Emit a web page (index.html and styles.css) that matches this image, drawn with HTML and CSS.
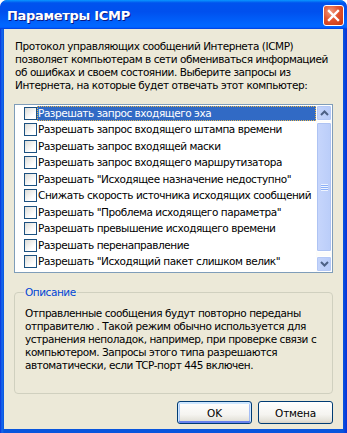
FILE: index.html
```html
<!DOCTYPE html>
<html lang="ru">
<head>
    <meta charset="UTF-8">
    <meta name="viewport" content="width=device-width, initial-scale=1.0">
    <title>Параметры ICMP</title>
    <link rel="stylesheet" href="styles.css">
</head>
<body>
    <div class="window">
        <div class="titlebar">
            <span class="title">Параметры ICMP</span>
            <button class="close" aria-label="Закрыть">
                <svg width="13" height="13" viewBox="0 0 13 13">
                    <path d="M2 2 L11 11 M11 2 L2 11" stroke="#fff" stroke-width="2.4" stroke-linecap="square"/>
                </svg>
            </button>
        </div>
        <div class="client">
            <p class="intro">Протокол управляющих сообщений Интернета (ICMP)<br>
            позволяет компьютерам в сети обмениваться информацией<br>
            об ошибках и своем состоянии. Выберите запросы из<br>
            Интернета, на которые будет отвечать этот компьютер:</p>

            <div class="listbox">
                <ul class="items">
                    <li class="item selected"><span class="check"></span><span class="label">Разрешать запрос входящего эха</span></li>
                    <li class="item"><span class="check"></span><span class="label">Разрешать запрос входящего штампа времени</span></li>
                    <li class="item"><span class="check"></span><span class="label">Разрешать запрос входящей маски</span></li>
                    <li class="item"><span class="check"></span><span class="label">Разрешать запрос входящего маршрутизатора</span></li>
                    <li class="item"><span class="check"></span><span class="label">Разрешать "Исходящее назначение недоступно"</span></li>
                    <li class="item"><span class="check"></span><span class="label">Снижать скорость источника исходящих сообщений</span></li>
                    <li class="item"><span class="check"></span><span class="label">Разрешать "Проблема исходящего параметра"</span></li>
                    <li class="item"><span class="check"></span><span class="label">Разрешать превышение исходящего времени</span></li>
                    <li class="item"><span class="check"></span><span class="label">Разрешать перенаправление</span></li>
                    <li class="item"><span class="check"></span><span class="label">Разрешать "Исходящий пакет слишком велик"</span></li>
                </ul>
                <div class="scrollbar">
                    <div class="sb-btn">
                        <svg width="9" height="6" viewBox="0 0 9 6"><path d="M1 5 L4.5 1.5 L8 5" fill="none" stroke="#4D6185" stroke-width="2"/></svg>
                    </div>
                    <div class="sb-track">
                        <div class="sb-thumb">
                            <span class="grip"></span>
                        </div>
                    </div>
                    <div class="sb-btn">
                        <svg width="9" height="6" viewBox="0 0 9 6"><path d="M1 1 L4.5 4.5 L8 1" fill="none" stroke="#4D6185" stroke-width="2"/></svg>
                    </div>
                </div>
            </div>

            <fieldset class="group">
                <legend>Описание</legend>
                <p class="desc">Отправленные сообщения будут повторно переданы<br>
                отправителю . Такой режим обычно используется для<br>
                устранения неполадок, например, при проверке связи с<br>
                компьютером. Запросы этого типа разрешаются<br>
                автоматически, если TCP-порт 445 включен.</p>
            </fieldset>

            <div class="actions">
                <button class="btn default">OK</button>
                <button class="btn">Отмена</button>
            </div>
        </div>
    </div>
</body>
</html>
```

FILE: styles.css
```css
body {
    margin: 0;
    padding: 0;
    background: #ffffff;
    font-family: "DejaVu Sans", "Liberation Sans", sans-serif;
    font-size: 10.5px;
    letter-spacing: -0.45px;
    color: #000;
}
.window {
    width: 347px;
    height: 433px;
    box-sizing: border-box;
    background: linear-gradient(90deg, #0831D9 0px, #166AEE 2px, #0855DD 4px, #0855DD 343px, #0831D9 347px);
    border-radius: 7px 7px 0 0;
    display: flex;
    flex-direction: column;
    overflow: hidden;
}
.titlebar {
    height: 29px;
    flex: none;
    display: flex;
    align-items: center;
    justify-content: space-between;
    padding: 0 3px 0 7px;
    background: linear-gradient(#0997FF 0%, #0053EE 10%, #0050EE 40%, #0066FF 85%, #0066FF 92%, #005BFF 95%, #003DD7 100%);
    border-radius: 7px 7px 0 0;
}
.title {
    font-family: "DejaVu Sans", sans-serif;
    font-weight: bold;
    font-size: 13px;
    color: #fff;
    text-shadow: 1px 1px 0 #0A1883;
    letter-spacing: -0.3px;
    margin-top: 1px;
}
.close {
    width: 21px;
    height: 21px;
    padding: 0;
    border: 1px solid #fff;
    border-radius: 3px;
    background: radial-gradient(circle at 35% 30%, #F19B7E 0%, #E2532F 45%, #C5360E 100%);
    display: flex;
    align-items: center;
    justify-content: center;
    margin-top: 1px;
}
.client {
    flex: 1;
    margin: 0 4px 4px;
    background: #ECE9D8;
    padding: 11px 10px 0;
    display: flex;
    flex-direction: column;
}
.intro {
    margin: 0 0 0 1px;
    line-height: 13px;
    white-space: nowrap;
}
.listbox {
    margin-top: 12px;
    height: 169px;
    box-sizing: border-box;
    border: 1px solid #7F9DB9;
    background: #fff;
    display: flex;
}
.items {
    list-style: none;
    margin: 0;
    padding: 0;
    flex: 1;
    min-width: 0;
}
.item {
    height: 16.5px;
    display: flex;
    align-items: center;
    white-space: nowrap;
}
.check {
    width: 11px;
    height: 11px;
    flex: none;
    margin-left: 9px;
    border: 1px solid #1C5180;
    background: linear-gradient(135deg, #DCDCD7 0%, #fff 70%);
}
.label {
    flex: 1;
    height: 15px;
    line-height: 15px;
    padding-left: 1px;
    box-sizing: border-box;
    overflow: hidden;
}
.selected .label {
    background: #316AC5;
    color: #fff;
    outline: 1px dotted #E8B850;
    outline-offset: -1px;
}
.scrollbar {
    width: 16px;
    flex: none;
    display: flex;
    flex-direction: column;
    background: #FCFCFA;
}
.sb-btn {
    height: 16px;
    flex: none;
    box-sizing: border-box;
    border: 1px solid #fff;
    border-radius: 2px;
    background: linear-gradient(90deg, #C5D5FB, #B7CBF8);
    display: flex;
    align-items: center;
    justify-content: center;
    box-shadow: inset 0 0 0 1px #B4C8F6;
}
.sb-track {
    flex: 1;
    padding: 1px 0 4px;
    display: flex;
}
.sb-thumb {
    flex: 1;
    box-sizing: border-box;
    border: 1px solid #fff;
    border-radius: 2px;
    background: linear-gradient(90deg, #C7D6FC, #BACDF9);
    box-shadow: inset 0 0 0 1px #AEC3F3;
    display: flex;
    align-items: center;
    justify-content: center;
}
.grip {
    width: 7px;
    height: 7px;
    background: repeating-linear-gradient(#EEF4FE 0px, #EEF4FE 1px, #8CB0F8 1px, #8CB0F8 2px);
}
.group {
    margin: 13px 0 0;
    padding: 2px 10px 0;
    border: 1px solid #D0D0BF;
    border-radius: 4px;
    height: 108px;
    box-sizing: border-box;
}
.group legend {
    padding: 0 1px;
    margin-left: -1px;
    color: #0046D5;
    line-height: 13px;
}
.desc {
    margin: 6px 0 0;
    line-height: 13px;
    white-space: nowrap;
}
.actions {
    margin-top: 7px;
    display: flex;
    justify-content: flex-end;
    gap: 6px;
}
.btn {
    width: 75px;
    height: 23px;
    padding: 0;
    font-family: "DejaVu Sans", "Liberation Sans", sans-serif;
    font-size: 10.5px;
    letter-spacing: -0.2px;
    color: #000;
    border: 1px solid #003C74;
    border-radius: 3px;
    background: linear-gradient(#FFFFFF 0%, #F5F4F0 60%, #E3E1D8 90%, #D6D0C5 100%);
}
.btn.default {
    box-shadow: inset 0 1px 0 1px #CEE7FF, inset 0 -1px 0 1px #6982EE, inset 1px 0 0 1px #B0CCF6, inset -1px 0 0 1px #A4BDF5;
}
```
